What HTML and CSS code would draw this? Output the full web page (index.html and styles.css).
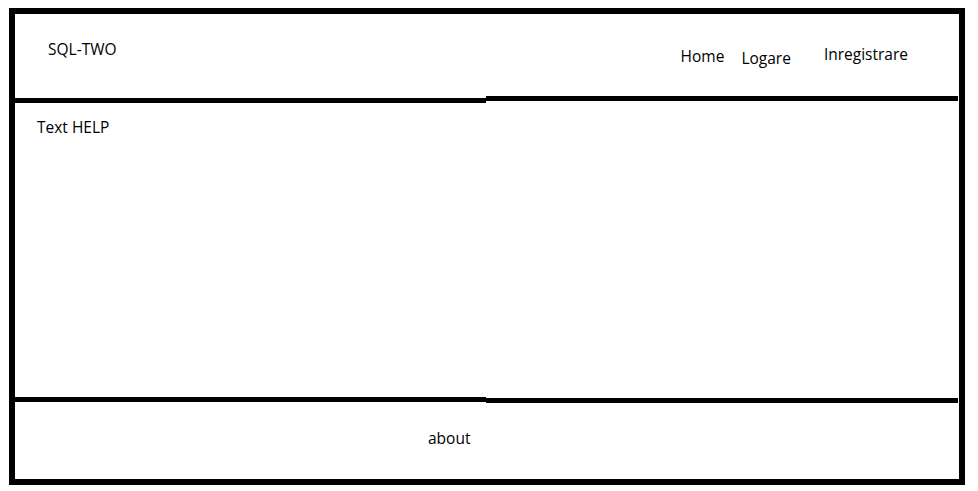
FILE: index.html
```html
<!DOCTYPE html>
<html lang="en">
<head>
	<meta charset="UTF-8">
	<title>SQL-TWO</title>
	<link rel="stylesheet" href="styles.css">
</head>
<body>
	<div class="page">
		<div class="header">
			<div class="logo">SQL-TWO</div>
			<ul class="nav">
				<li class="home">Home</li>
				<li class="login">Logare</li>
				<li class="register">Inregistrare</li>
			</ul>
		</div>
		<div class="rule rule-top">
			<span class="half left"></span>
			<span class="half right"></span>
		</div>
		<div class="main">
			<p class="help">Text HELP</p>
		</div>
		<div class="rule rule-bottom">
			<span class="half left"></span>
			<span class="half right"></span>
		</div>
		<div class="footer">
			<span class="about">about</span>
		</div>
	</div>
</body>
</html>
```

FILE: styles.css
```css
*{margin: 0;padding: 0;box-sizing: border-box;}
ul{list-style: none;}
body{background: #fff;font-family: "Open Sans", "Noto Sans", sans-serif;font-size: 15.5px;line-height: 20px;color: #000;}
.page{margin: 8px 0 0 9px;width: 956px;height: 477px;border: 6px solid #000;display: flex;flex-direction: column;}
.header{height: 82px;display: flex;padding-left: 33px;}
.logo{padding-top: 25px;}
.nav{display: flex;margin-left: auto;padding-right: 51px;}
.nav .home{margin-top: 32px;}
.nav .login{margin-top: 34px;margin-left: 17px;}
.nav .register{margin-top: 30px;margin-left: 33px;}
.rule{display: flex;}
.rule .half{display: block;height: 5px;background: #000;}
.rule .left{width: 471px;}
.rule .right{flex: 1;margin-right: 1px;}
.rule-top{height: 7px;}
.rule-top .left{margin-top: 2px;}
.rule-bottom{height: 6px;}
.rule-bottom .right{margin-top: 1px;}
.main{height: 294px;padding: 14px 0 0 22px;}
.footer{flex: 1;padding: 25px 0 0 413px;}
```
